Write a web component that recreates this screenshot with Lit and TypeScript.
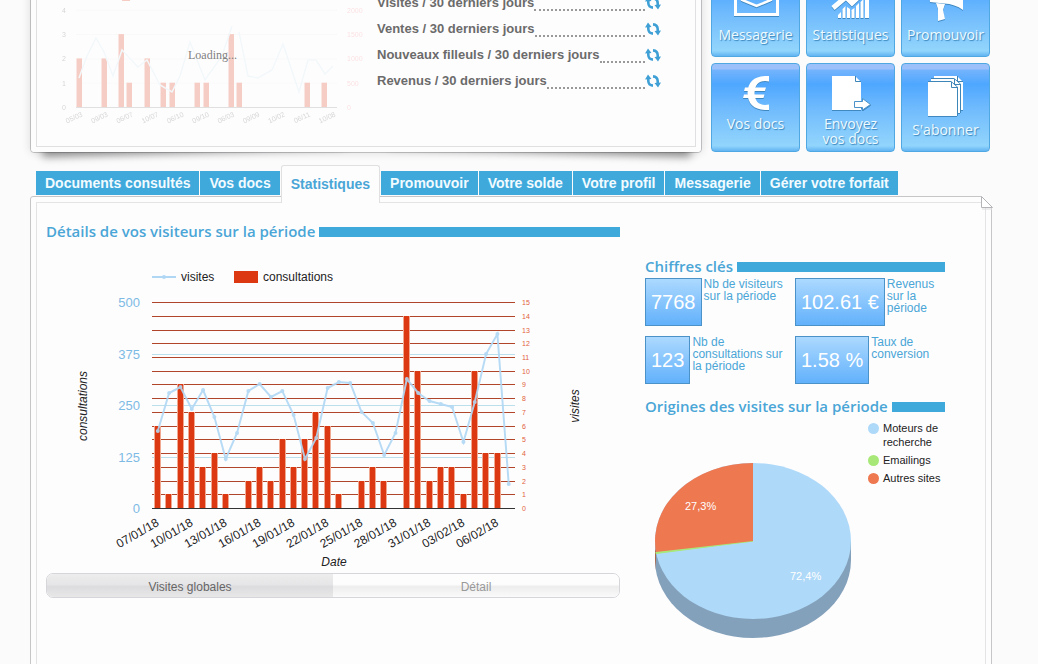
import { LitElement, html, svg, css } from "lit";
import { customElement, state } from "lit/decorators.js";

const sheet = css`
  :host {
    display: block;
    box-sizing: border-box;
    font-family: "Liberation Sans", Arial, sans-serif;
  }
  *,
  *::before,
  *::after {
    box-sizing: border-box;
  }
  svg {
    display: block;
  }
`;

/* ---------- section heading with trailing bar ---------- */
@customElement("section-title")
export class SectionTitle extends LitElement {
  static styles = [
    sheet,
    css`
      h2 {
        display: flex;
        align-items: center;
        gap: 4px;
        margin: 0;
        height: 22px;
        font: 600 15px/20px "Open Sans", "Noto Sans", sans-serif;
        color: #4aa6d6;
        white-space: nowrap;
      }
      .bar {
        flex: 1;
        height: 10px;
        margin-top: 2px;
        background: #3fa9dc;
      }
    `,
  ];
  render() {
    return html`<h2><slot></slot><span class="bar"></span></h2>`;
  }
}

/* ---------- faded preview chart ---------- */
@customElement("preview-chart")
export class PreviewChart extends LitElement {
  static styles = [
    sheet,
    css`
      :host {
        position: relative;
      }
      .loading {
        position: absolute;
        left: 151px;
        top: 73px;
        font: 12px/14px "Liberation Serif", serif;
        color: #808080;
      }
      .chart {
        opacity: 0.24;
        filter: blur(0.7px);
      }
      text {
        font: 7px "Liberation Sans", sans-serif;
        fill: #555;
      }
      .right {
        fill: #e88;
      }
    `,
  ];
  private bars: [number, number][] = [
    [79, 2], [104, 2], [121, 3], [129, 1], [147, 2], [163, 1], [172, 1],
    [197, 1], [206, 1], [231, 3], [239, 1], [307, 1], [324, 1],
  ];
  render() {
    const days = ["05/03", "09/03", "06/07", "10/07", "06/10", "09/10", "06/03", "09/09", "10/02", "06/11", "10/08"];
    return html`<svg class="chart" width="340" height="171" viewBox="37 -25 340 171" aria-hidden="true">
        <rect x="77" y="-2" width="10" height="2" fill="#b0d8f5"></rect>
        <rect x="122" y="-4" width="8" height="5" fill="#dc3912"></rect>
        ${[0, 1, 2, 3, 4].map(
          (n) => svg`<line x1="76" x2="337" y1=${107.5 - n * 24.3} y2=${107.5 - n * 24.3} stroke=${n ? "#eee" : "#888"}></line>
          <text x="62" y=${110 - n * 24.3}>${n}</text>
          <text class="right" x="347" y=${110 - n * 24.3}>${n ? n * 500 : 0}</text>`
        )}
        ${this.bars.map(([x, n]) => svg`<rect x=${x - 2.5} y=${107 - n * 24.3} width="5.5" height=${n * 24.3} fill="#dc3912"></rect>`)}
        <path d="M79 78 L87 56 L96 38 L104 52 L113 76 L122 50 L138 67 L147 60 L160 85 L172 92 L180 76 L190 42 L205 80 L222 56 L232 26 M239 32 L248 76 L258 78 L272 70 L283 44 L299 92 L308 60 L316 60 L325 74 L333 66" fill="none" stroke="#cfe8ef" stroke-width="1.5"></path>
        ${days.map((d, i) => {
          const x = 83 + i * 25.3;
          return svg`<text x=${x} y="116" text-anchor="end" transform="rotate(-25 ${x} 116)">${d}</text>`;
        })}
      </svg>
      <span class="loading">Loading...</span>`;
  }
}

/* ---------- visitor chart ---------- */
@customElement("visits-chart")
export class VisitsChart extends LitElement {
  static styles = [
    sheet,
    css`
      svg {
        width: 100%;
        height: auto;
      }
      text {
        font: 12px "Liberation Sans", Arial, sans-serif;
        fill: #222;
      }
      .blue {
        font-size: 13px;
        fill: #7dbbe4;
      }
      .small {
        font-size: 7px;
        fill: #e0623c;
      }
      .axis {
        font-style: italic;
      }
    `,
  ];
  private counts = [6, 1, 9, 7, 3, 4, 1, 0, 2, 3, 2, 5, 3, 5, 7, 6, 1, 0, 2, 3, 2, 0, 14, 10, 2, 3, 3, 1, 10, 4, 4, 0];
  private visits = [
    431, 393, 387, 409, 390, 417, 459, 433, 391, 384, 397, 391, 415, 459, 438, 388, 382, 383, 412, 423, 455, 433, 379,
    393, 401, 404, 407, 442, 402, 354, 334, 484,
  ];
  private dates = ["07/01/18", "10/01/18", "13/01/18", "16/01/18", "19/01/18", "22/01/18", "25/01/18", "28/01/18", "31/01/18", "03/02/18", "06/02/18"];
  private x(i: number) {
    return 157.8 + i * 11.32;
  }
  private y(n: number) {
    return Math.round(508 - n * 13.73);
  }
  render() {
    const levels = Array.from({ length: 16 }, (_, n) => n);
    const line = this.visits.map((v, i) => `${this.x(i)},${v}`).join(" ");
    return html`<svg viewBox="46 242 574 331" role="img" aria-label="visites, consultations">
      <line x1="152" x2="176" y1="277" y2="277" stroke="#b0d8f5" stroke-width="2"></line>
      <circle cx="164" cy="277" r="2" fill="#b0d8f5"></circle>
      <text x="181" y="281">visites</text>
      <rect x="234" y="271" width="24" height="12" fill="#dc3912"></rect>
      <text x="263" y="281">consultations</text>
      ${[0, 1, 2, 3, 4].map(
        (n) => svg`<text class="blue" x="140" y=${513 - n * 51.5} text-anchor="end">${n * 125}</text>
        <rect x="152" y=${Math.round(508 - n * 51.4)} width="363" height="1" fill="#bcdfec"></rect>`
      )}
      ${levels.map(
        (n) => svg`${n ? svg`<rect x="152" y=${this.y(n)} width="363" height="1" fill="#b0452a"></rect>` : ""}
        <text class="small" x="522" y=${this.y(n) + 3}>${n}</text>`
      )}
      ${this.counts.map((n, i) => {
        const left = Math.round(this.x(i) - 3.8);
        return svg`<rect x=${left} y=${this.y(n)} width="7" height=${508 - this.y(n)} fill="#f0a890"></rect>
        <rect x=${left + 1} y=${this.y(n)} width="5" height=${508 - this.y(n)} fill="#dc3912"></rect>`;
      })}
      <rect x="152" y="508" width="363" height="1" fill="#333"></rect>
      <g opacity="0.9" fill="#b0d8f5">
        <polyline points=${line} fill="none" stroke="#b0d8f5" stroke-width="2"></polyline>
        ${this.visits.map((v, i) => svg`<circle cx=${this.x(i)} cy=${v} r="2"></circle>`)}
      </g>
      ${this.dates.map((d, i) => {
        const x = this.x(i * 3) + 2;
        return svg`<text x=${x} y="525" text-anchor="end" transform="rotate(-30 ${x} 525)">${d}</text>`;
      })}
      <text class="axis" x="334" y="566" text-anchor="middle">Date</text>
      <text class="axis" x="87" y="406" text-anchor="middle" transform="rotate(-90 87 406)">consultations</text>
      <text class="axis" x="579" y="406" text-anchor="middle" transform="rotate(-90 579 406)">visites</text>
    </svg>`;
  }
}

/* ---------- origin pie ---------- */
@customElement("origin-pie")
export class OriginPie extends LitElement {
  static styles = [
    sheet,
    css`
      svg {
        width: 100%;
        height: auto;
      }
      text {
        font: 11px "Liberation Sans", Arial, sans-serif;
        fill: #222;
      }
      .share {
        fill: #fff;
      }
    `,
  ];
  render() {
    return html`<svg viewBox="645 417 300 230" role="img" aria-label="Origines des visites">
      <path d="M655 541 V560 A98 78 0 0 0 851 560 V541 Z" fill="#84a1bb"></path>
      <path d="M655 541 V560 L656 570 V552 Z" fill="#a8684c"></path>
      <ellipse cx="753" cy="541" rx="98" ry="78" fill="#aed9f8"></ellipse>
      <path d="M753 541 L656 552 L656 553.500 Z" fill="#a8e878" stroke="#a8e878"></path>
      <path d="M753 541 V463 A98 78 0 0 0 656 552 Z" fill="#ee7850"></path>
      <text class="share" x="685" y="510">27,3%</text>
      <text class="share" x="790" y="580">72,4%</text>
      <circle cx="873.500" cy="428.500" r="5.500" fill="#aed9f8"></circle>
      <text x="883" y="432">Moteurs de</text>
      <text x="883" y="446">recherche</text>
      <circle cx="873.500" cy="460.500" r="5.500" fill="#a8e878"></circle>
      <text x="883" y="464">Emailings</text>
      <circle cx="873.500" cy="478.500" r="5.500" fill="#ee7850"></circle>
      <text x="883" y="482">Autres sites</text>
    </svg>`;
  }
}

/* A white sheet with a folded corner; the right and bottom edges are drawn darker. */
const sheetShape = (x: number, y: number) => svg`
  <path d="M${x} ${y} H${x + 23} L${x + 29} ${y + 6} V${y + 34} H${x} Z" fill="#fff"></path>
  <path d="M${x + 23.5} ${y} V${y + 5.5} H${x + 29}" fill="none" stroke="#3f86b8"></path>`;
const sheetEdge = (x: number, y: number) => svg`
  <path d="M${x} ${y + 0.5} H${x + 23} L${x + 29.5} ${y + 6} V${y + 34}" transform="translate(0 -1)" fill="none" stroke="#3f86b8"></path>`;

const icons = {
  mail: svg`<svg width="48" height="40" viewBox="731 -19 48 40" fill="none" stroke="#fff">
    <path d="M734.500 -4 V14.500 H776.500 V-4 L755.500 -17 Z" stroke-width="3"></path>
    <path d="M741 -3 V0 L755.500 6 L770 0 V-3" stroke-width="2.500"></path></svg>`,
  stats: svg`<svg width="40" height="40" viewBox="831 -19 40 40" fill="#fff">
    <path d="M838 18 v-3 l3 -3 v6 Z M842.500 18 v-9 l3 -3 v12 Z M847 18 v-11 l3 2 v9 Z M851.500 18 v-8 l3 -2 v10 Z M856 18 v-12 l3 -3 v15 Z M860.500 18 v-16 l3 -3 v19 Z M865 18 v-21 l4 -4 v25 Z"></path>
    <path d="M833 8 L846 -3 L852 3 L868 -12" fill="none" stroke="#fff" stroke-width="5"></path></svg>`,
  horn: svg`<svg width="40" height="40" viewBox="925 -19 40 40" fill="#fff">
    <path d="M928 -8 L944 -10 L962 -18 V10 Q954 4 943 3.500 L929 2 Z"></path>
    <path d="M935 3 L944 4 L942 10 L944 19 L937 21 L937 9 Z"></path></svg>`,
  euro: svg`<svg width="28" height="34" viewBox="0 0 28 34" fill="#fff">
    <path d="M27 0 V5.500 Q13 3 12.500 17 Q13 31 27 28.500 V34 Q6 35 5.500 17 Q6 -1 27 0 Z"></path>
    <path d="M3 11.500 H24 L23 15 H2 Z M2 18.500 H22.500 L21.500 22 H1 Z"></path></svg>`,
  send: svg`<svg width="40" height="34" viewBox="832 76 40 34">${sheetShape(833, 76)}
    <path d="M855.500 101.500 H863.500 V98.500 L871.500 104.500 L863.500 110 V107.500 H855.500 Z" fill="#fff" stroke="#4b92c8"></path></svg>`,
  pages: svg`<svg width="38" height="40" viewBox="926 76 38 40">
    ${sheetShape(933, 76)}${sheetEdge(930, 79)}${sheetShape(930, 79)}${sheetEdge(927, 82)}${sheetShape(927, 82)}</svg>`,
};

const refresh = html`<svg width="16" height="14" viewBox="0 0 16 14" aria-hidden="true">
  <path d="M3.300 4 V7 Q3.500 11.300 8 11.600 M12.700 10 V7 Q12.500 2.700 8 2.400" fill="none" stroke="#3fa0d5" stroke-width="2.600"></path>
  <path d="M0 5.500 L3 0.500 L6.500 5 Z M9.500 9 L13 13.500 L16 8.500 Z" fill="#3fa0d5"></path>
</svg>`;

@customElement("app-root")
export class AppRoot extends LitElement {
  static styles = [
    sheet,
    css`
      :host {
        height: 100vh;
        overflow: hidden;
        background: #fbfbfb;
      }
      .page {
        display: flex;
        flex-direction: column;
        min-height: calc(100vh + 60px);
        margin-top: -32px;
        padding: 0 46px 0 30px;
      }
      .top {
        display: flex;
        gap: 9px;
        padding-right: 2px;
      }
      .summary {
        position: relative;
        z-index: 0;
        flex: 1;
        padding: 5px;
        border: 1px solid #bdbdbf;
        border-radius: 4px;
        background: #fefdfe;
        box-shadow: 0 0 10px rgba(0, 0, 0, 0.12);
      }
      .lift {
        position: absolute;
        z-index: -2;
        bottom: 13px;
        width: 45%;
        height: 60px;
        box-shadow: 0 13px 8px rgba(0, 0, 0, 0.4);
      }
      .lift-left {
        left: 10px;
        transform: rotate(-2deg);
      }
      .lift-right {
        right: 10px;
        transform: rotate(2deg);
      }
      .cover {
        position: absolute;
        z-index: -1;
        inset: 0;
        border-radius: 4px;
        background: #fefdfe;
      }
      .inner {
        display: flex;
        height: 100%;
        border: 1px solid #e0e0e3;
      }
      .rows {
        flex: 1;
        margin: 0;
        padding: 15px 34px 0 0;
        list-style: none;
      }
      .row {
        display: flex;
        align-items: center;
        height: 26px;
        font: bold 13px/26px "Liberation Sans", Arial, sans-serif;
        color: #6b6b6b;
        white-space: nowrap;
      }
      .leader {
        flex: 1;
        height: 16px;
        border-bottom: 2px dotted #999;
      }
      .reload {
        width: 16px;
        height: 14px;
        padding: 0;
        border: 0;
        background: none;
      }
      .tiles {
        display: grid;
        grid-template-columns: repeat(3, 89px);
        grid-auto-rows: 89px;
        gap: 6px;
      }
      .tile {
        display: flex;
        flex-direction: column;
        align-items: center;
        gap: 6px;
        padding: 12px 0 0;
        border: 1px solid #50a8e2;
        border-radius: 4px;
        background: linear-gradient(#9cc0fa 0 5px, #74b4fd 6px, #4ea7ff 20px, #6fbafd 50%, #92d5fc 94%, #62b4f2);
        font: 500 14px/15px "Open Sans", "Noto Sans", sans-serif;
        color: #eefaff;
        text-shadow: 1px 1px 1px #3a86bc;
        white-space: pre-line;
      }
      .tile svg {
        flex: none;
        filter: drop-shadow(0 1px 0 #4088c0);
      }
      .tabs {
        display: flex;
        align-items: flex-end;
        gap: 1px;
        height: 32px;
        margin-top: 12px;
        padding: 0 6px 2px;
      }
      .tab {
        height: 24px;
        margin: 0;
        padding: 0 9px;
        border: 0;
        background: #3fa9dc;
        color: #f2fbff;
        font: bold 14px/24px "Liberation Sans", Arial, sans-serif;
        white-space: nowrap;
      }
      .tab[aria-selected="true"] {
        position: relative;
        z-index: 1;
        height: 38px;
        margin-bottom: -8px;
        padding-bottom: 2px;
        border: 1px solid #e0e0e0;
        border-bottom: 0;
        border-radius: 3px 3px 0 0;
        background: #fefdfe;
        color: #4aa6d6;
      }
      .panel {
        position: relative;
        flex: 1;
        display: flex;
        margin-top: -1px;
        padding: 5px;
        border: 1px solid #c6c6c9;
        border-radius: 3px 0 0 0;
        background: #fefdfe;
      }
      .fold {
        position: absolute;
        top: -1px;
        right: -2px;
      }
      .content {
        flex: 1;
        display: grid;
        grid-template-columns: minmax(0, 574fr) minmax(0, 300fr);
        gap: 25px;
        align-items: start;
        padding: 17px 40px 0 9px;
        border: 1px solid #e4e4e6;
      }
      .right {
        padding-top: 35px;
      }
      .kpis {
        display: grid;
        grid-template-columns: minmax(0, 1fr) minmax(0, 1fr);
        gap: 10px 0;
        margin: 1px 0 11px;
      }
      .kpi {
        display: flex;
        flex-direction: row-reverse;
        justify-content: flex-end;
        gap: 2px;
      }
      .kpi dt {
        flex: 0 1 auto;
        padding-right: 4px;
        font-size: 12px;
        line-height: 12px;
        color: #4aa6d6;
      }
      .kpi dd {
        flex: none;
        height: 48px;
        margin: 0;
        padding: 0 5px;
        border: 1px solid #4b92c8;
        background: linear-gradient(#acd9ff, #62b1fb);
        font: 20px/46px "Liberation Sans", Arial, sans-serif;
        color: #fff;
        white-space: nowrap;
      }
      .switch {
        display: grid;
        grid-template-columns: 1fr 1fr;
        border: 1px solid #d6d6da;
        border-radius: 7px;
        overflow: hidden;
      }
      .mode {
        height: 23px;
        padding: 2px 0 0;
        border: 0;
        background: linear-gradient(#fdfdfd 0 45%, #ededee 55%, #fafafa);
        font: 12px/20px "Liberation Sans", Arial, sans-serif;
        color: #999;
      }
      .mode[aria-pressed="true"] {
        background: linear-gradient(#ededed, #e6e5e7 45%, #dcdbdd 55%, #e8e8e9);
        color: #666;
      }
    `,
  ];

  @state() private tab = "Statistiques";
  @state() private mode = "Visites globales";

  private tabs = ["Documents consultés", "Vos docs", "Statistiques", "Promouvoir", "Votre solde", "Votre profil", "Messagerie", "Gérer votre forfait"];
  private rows = ["Visites / 30 derniers jours", "Ventes / 30 derniers jours", "Nouveaux filleuls / 30 derniers jours", "Revenus / 30 derniers jours"];
  private kpis = [
    ["7768", "Nb de visiteurs sur la période"],
    ["102.61 €", "Revenus sur la période"],
    ["123", "Nb de consultations sur la période"],
    ["1.58 %", "Taux de conversion"],
  ];
  private tiles = [
    { icon: icons.mail, label: "Messagerie" },
    { icon: icons.stats, label: "Statistiques" },
    { icon: icons.horn, label: "Promouvoir" },
    { icon: icons.euro, label: "Vos docs" },
    { icon: icons.send, label: "Envoyez\nvos docs" },
    { icon: icons.pages, label: "S'abonner" },
  ];

  render() {
    return html`<div class="page">
      <div class="top">
        <section class="summary">
          <span class="lift lift-left"></span><span class="lift lift-right"></span><span class="cover"></span>
          <div class="inner">
            <preview-chart></preview-chart>
            <ul class="rows">
              ${this.rows.map(
                (r) => html`<li class="row"><span>${r}</span><span class="leader"></span><button class="reload" aria-label="Actualiser">${refresh}</button></li>`
              )}
            </ul>
          </div>
        </section>
        <nav class="tiles">
          ${this.tiles.map((t) => html`<button class="tile">${t.icon}<span>${t.label}</span></button>`)}
        </nav>
      </div>
      <div class="tabs" role="tablist">
        ${this.tabs.map(
          (t) => html`<button class="tab" role="tab" aria-selected=${t === this.tab} @click=${() => (this.tab = t)}>${t}</button>`
        )}
      </div>
      <main class="panel">
        <svg class="fold" width="13" height="14" viewBox="0 0 13 14" aria-hidden="true">
          <path d="M1 0 H13 V12 H12 Z" fill="#fbfbfb"></path>
          <path d="M1.500 0.500 V11.500 H12.500 Z" fill="#fff" stroke="#b4b4b8"></path>
          <path d="M2 13 H12" stroke="#dcdcdf"></path>
        </svg>
        <div class="content">
          <section>
            <section-title>Détails de vos visiteurs sur la période</section-title>
            <visits-chart></visits-chart>
            <div class="switch">
              ${["Visites globales", "Détail"].map(
                (m) => html`<button class="mode" aria-pressed=${m === this.mode} @click=${() => (this.mode = m)}>${m}</button>`
              )}
            </div>
          </section>
          <section class="right">
            <section-title>Chiffres clés</section-title>
            <dl class="kpis">
              ${this.kpis.map(([v, l]) => html`<div class="kpi"><dt>${l}</dt><dd>${v}</dd></div>`)}
            </dl>
            <section-title>Origines des visites sur la période</section-title>
            <origin-pie></origin-pie>
          </section>
        </div>
      </main>
    </div>`;
  }
}
